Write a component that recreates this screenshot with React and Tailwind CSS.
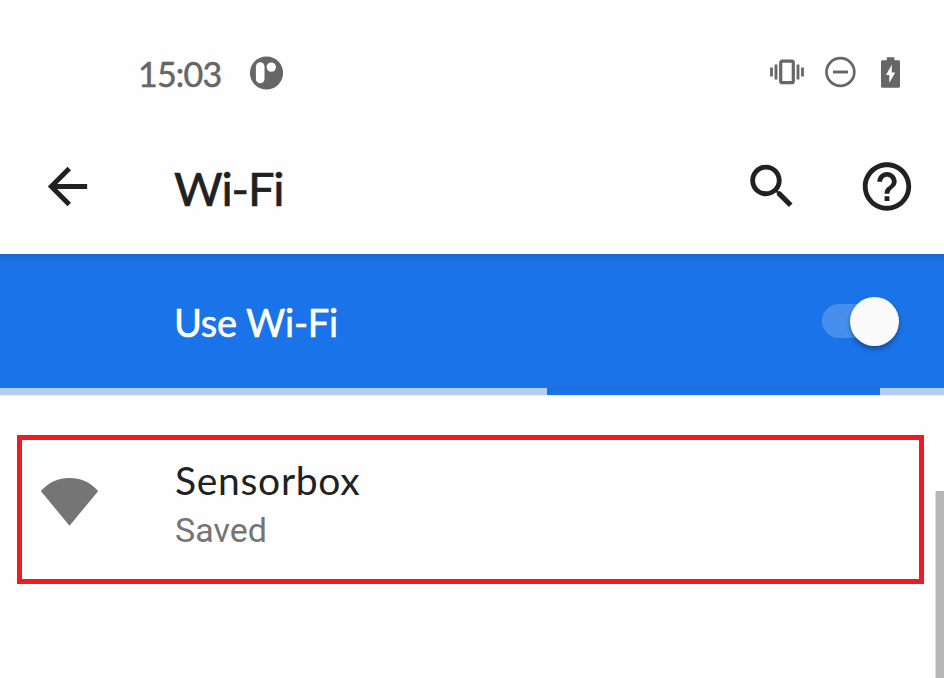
function RotationLogo() {
  return (
    <svg className="ml-[27px] h-[34px] w-[34px]" viewBox="0 0 34 34">
      <circle cx="17.5" cy="17" r="16.6" fill="#666" />
      <rect x="6.9" y="6.3" width="8.6" height="21" rx="4.3" fill="#fefefe" />
      <circle cx="22.3" cy="11.1" r="4.7" fill="#fefefe" />
    </svg>
  );
}

function VibrateIcon() {
  return (
    <svg className="h-[26px] w-[34px]" viewBox="0 0 34 26">
      <rect x="10.7" y="2.1" width="12.6" height="21.6" rx="1.5" fill="none" stroke="#666" strokeWidth="3.2" />
      <path d="M1.5 8.5v9M6 5.5v15M28 5.5v15M32.5 8.5v9" stroke="#666" strokeWidth="2.8" />
    </svg>
  );
}

function DoNotDisturbIcon() {
  return (
    <svg className="ml-[21px] h-[32px] w-[32px]" viewBox="0 0 32 32">
      <circle cx="15.4" cy="16" r="13.9" fill="none" stroke="#666" strokeWidth="2.7" />
      <path d="M8 16h15" stroke="#666" strokeWidth="2.9" />
    </svg>
  );
}

function BatteryIcon() {
  return (
    <svg className="ml-[24px] h-[32px] w-[20px]" viewBox="0 0 20 32">
      <path d="M5.8 1.3h7.6v3H17.6q1.4 0 1.4 1.4V30.3q0 1.4-1.4 1.4H1.4Q0 31.7 0 30.3V5.7q0-1.4 1.4-1.4H5.8z" fill="#666" />
      <path d="M10.8 8.6v7.8h3.4L8.3 26.9v-8H5z" fill="#fefefe" />
    </svg>
  );
}

function MaterialIcon({ d, className }) {
  return (
    <svg className={className} viewBox="0 0 24 24" fill="#212121">
      <path d={d} />
    </svg>
  );
}

const ARROW = "M20 11H7.83l5.59-5.59L12 4l-8 8 8 8 1.41-1.41L7.83 13H20v-2z";
const SEARCH =
  "M15.5 14h-.79l-.28-.27C15.41 12.59 16 11.11 16 9.5 16 5.91 13.09 3 9.5 3S3 5.91 3 9.5 5.91 16 9.5 16c1.61 0 3.09-.59 4.23-1.57l.27.28v.79l5 4.99L20.49 19l-4.99-5zm-6 0C7.01 14 5 11.99 5 9.5S7.01 5 9.5 5 14 7.01 14 9.5 11.99 14 9.5 14z";
const HELP =
  "M11 18h2v-2h-2v2zm1-16C6.48 2 2 6.48 2 12s4.48 10 10 10 10-4.48 10-10S17.52 2 12 2zm0 18c-4.41 0-8-3.59-8-8s3.59-8 8-8 8 3.59 8 8-3.59 8-8 8zm0-14c-2.21 0-4 1.79-4 4h2c0-1.1.9-2 2-2s2 .9 2 2c0 2-3 1.75-3 5h2c0-2.25 3-2.5 3-5 0-2.21-1.79-4-4-4z";

export default function App() {
  return (
    <div className="flex h-[678px] w-[944px] flex-col overflow-hidden bg-[#fefefe] font-[Lato,sans-serif]">
      <div className="flex h-[120px] items-start pt-[56px]">
        <div className="ml-[138px] w-[84px] whitespace-nowrap text-[34px] leading-[36px] tracking-[-0.8px] text-[#666] [-webkit-text-stroke:0.5px_#666]">15:03</div>
        <RotationLogo />
        <div className="ml-auto mr-[43px] flex items-center">
          <VibrateIcon />
          <DoNotDisturbIcon />
          <BatteryIcon />
        </div>
      </div>

      <div className="flex h-[134px] items-start pt-[37px]">
        <MaterialIcon d={ARROW} className="ml-[38px] h-[59px] w-[59px]" />
        <h1 className="ml-[77px] whitespace-nowrap text-[47px] leading-[62px] tracking-[-1.1px] text-[#212121] [-webkit-text-stroke:0.7px_#212121]">Wi-Fi</h1>
        <MaterialIcon d={SEARCH} className="ml-auto h-[59px] w-[58px]" />
        <MaterialIcon d={HELP} className="ml-[57px] mr-[28px] h-[59px] w-[58px]" />
      </div>

      <div className="flex h-[134px] items-center bg-linear-to-b from-[#1769d5] via-[#1a73e8] via-8% to-[#1a73e8] pl-[174px] pr-[45px]">
        <div className="whitespace-nowrap pt-[2px] text-[38px] leading-[44px] tracking-[-0.2px] text-white [-webkit-text-stroke:0.6px_white]">Use Wi-Fi</div>
        <div className="ml-auto flex h-[34px] w-[77px] items-center justify-end rounded-full bg-[#488fed]">
          <div className="h-[49px] w-[49px] shrink-0 rounded-full bg-[#fafafa] shadow-[0_3px_5px_rgba(0,0,0,0.35)]" />
        </div>
      </div>

      <div className="flex h-[8px] border-b border-[#e4ecf8] bg-[#b3ceef]">
        <div className="ml-[547px] w-[333px] border-t border-[#1969d3] bg-[#1a73e8]" />
      </div>

      <div className="flex flex-1 items-start">
        <div className="ml-[17px] mt-[39px] flex h-[149px] w-[907px] items-start border-[5px] border-[#ed1c24]">
          <svg className="ml-[18px] mt-[37px] h-[50px] w-[59px]" viewBox="0 0 59 50">
            <path d="M0.8 14Q12.5 0.9 29.5 0.9T58.2 14L29.5 48.8z" fill="#757575" />
          </svg>
          <div className="ml-[76px] mt-[18px]">
            <div className="whitespace-nowrap text-[39px] leading-[44px] tracking-[0.7px] text-[#212121]">Sensorbox</div>
            <div className="whitespace-nowrap pt-[3px] font-[Roboto,sans-serif] text-[34px] leading-[50px] text-[#757575]">Saved</div>
          </div>
        </div>
        <div className="ml-auto mt-[95px] h-[187px] w-[9px] border-l border-[#dedede] bg-[#b7b7b7]" />
      </div>
    </div>
  );
}
